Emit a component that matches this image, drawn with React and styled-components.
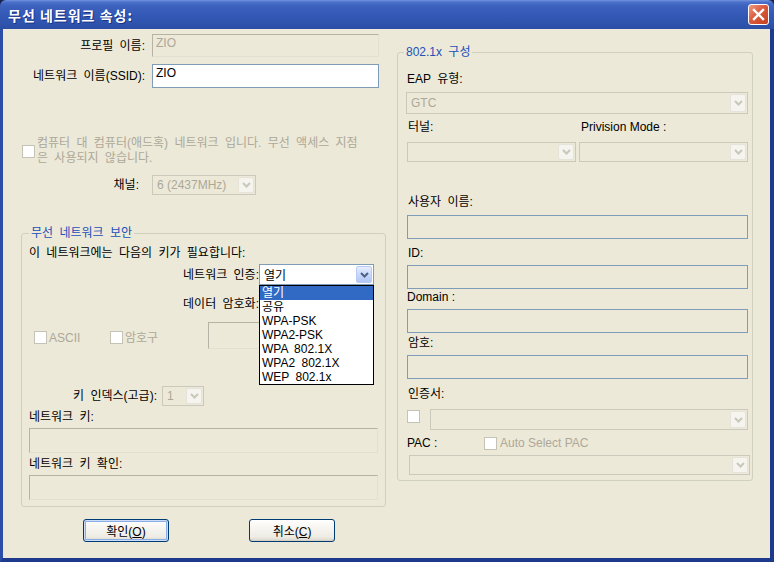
import React from 'react';
import styled, { createGlobalStyle } from 'styled-components';

// Windows XP (Luna) palette
const xp = {
  face: '#ece9d8',
  disabledText: '#aca899',
  groupBorder: '#d0d0bf',
  legend: '#2150b9',
  editBorder: '#7f9db9',
  comboDisabledBorder: '#cbc9bc',
  sunken: '#b5b3a6 #e2dfd3 #e2dfd3 #b5b3a6',
  selection: '#316ac5',
};

const GlobalStyle = createGlobalStyle`
  * { box-sizing: border-box; }
  html, body { margin: 0; padding: 0; background: #16244f; }
  body {
    font-family: "Liberation Sans", "Noto Sans CJK KR", sans-serif;
    font-size: 12px;
    word-spacing: 3px;
    color: #000;
  }
`;

const Window = styled.div`
  width: 774px;
  height: 562px;
  display: flex;
  flex-direction: column;
`;

const TitleBar = styled.div`
  height: 29px;
  flex: none;
  display: flex;
  align-items: center;
  justify-content: space-between;
  padding: 0 5px 0 8px;
  border-radius: 6px 6px 0 0;
  background: linear-gradient(
    to bottom,
    #7394de 0px,
    #4c71cb 2px,
    #3c62be 6px,
    #3459b6 14px,
    #3055af 22px,
    #2b4ea5 29px
  );
`;

const Title = styled.span`
  color: #fff;
  font-family: "Noto Sans CJK KR", sans-serif;
  font-weight: 700;
  font-size: 14px;
  line-height: 16px;
  letter-spacing: 1px;
  word-spacing: 0;
  text-shadow: 1px 1px 0 #1b3182;
`;

const CloseButton = styled.button`
  width: 21px;
  height: 21px;
  padding: 0;
  display: flex;
  align-items: center;
  justify-content: center;
  border: 1px solid #fff;
  border-radius: 3px;
  background: linear-gradient(135deg, #ee9c82 0%, #dc5a3d 45%, #c3411f 100%);
`;

const Frame = styled.div`
  flex: 1;
  display: flex;
  align-items: flex-start;
  gap: 11px;
  padding: 5px 17px 0 18px;
  background: ${xp.face};
  border-left: 3px solid #2d4ea6;
  border-right: 4px solid #1d3a8c;
  border-bottom: 4px solid #1d3a8c;
`;

const Column = styled.div`
  width: ${(p) => p.$w}px;
  flex: none;
  display: flex;
  flex-direction: column;
`;

const FormRow = styled.div`
  display: grid;
  grid-template-columns: ${(p) => p.$cols};
  column-gap: ${(p) => p.$gap || 0}px;
  align-items: center;
  margin-top: ${(p) => p.$mt || 0}px;
  padding-left: ${(p) => p.$pl || 0}px;
`;

const Label = styled.span`
  display: block;
  flex: none;
  width: ${(p) => (p.$w ? `${p.$w}px` : 'auto')};
  line-height: 14px;
  white-space: nowrap;
  word-spacing: ${(p) => (p.$latin ? 'normal' : '3px')};
  text-align: ${(p) => (p.$right ? 'right' : 'left')};
  padding-right: ${(p) => p.$pr || 0}px;
  padding-left: ${(p) => p.$pl || 0}px;
  margin-top: ${(p) => p.$mt || 0}px;
  color: ${(p) => (p.$disabled ? xp.disabledText : '#000')};
`;

const Edit = styled.div`
  height: ${(p) => p.$h}px;
  width: ${(p) => (p.$w ? `${p.$w}px` : 'auto')};
  margin-top: ${(p) => p.$mt || 0}px;
  padding: 1px 3px;
  line-height: 14px;
  white-space: nowrap;
  border: 1px solid;
  border-color: ${(p) => (p.$tone === 'disabled' ? xp.sunken : xp.editBorder)};
  background: ${(p) => (p.$tone === 'white' ? '#fff' : xp.face)};
  color: ${(p) => (p.$tone === 'disabled' ? xp.disabledText : '#000')};
`;

const ComboBox = styled.div`
  position: relative;
  display: flex;
  height: ${(p) => p.$h}px;
  width: ${(p) => (p.$w ? `${p.$w}px` : 'auto')};
  margin: ${(p) => p.$margin || '0'};
  border: 1px solid ${(p) => (p.$disabled ? xp.comboDisabledBorder : xp.editBorder)};
  background: ${(p) => (p.$disabled ? xp.face : '#fff')};
  flex: ${(p) => (p.$grow ? 1 : 'none')};
`;

const ComboText = styled.span`
  flex: 1;
  min-width: 0;
  display: flex;
  align-items: center;
  padding: 0 3px 0 4px;
  white-space: nowrap;
  overflow: hidden;
  word-spacing: normal;
  color: ${(p) => (p.$disabled ? xp.disabledText : '#000')};
`;

const ComboArrow = styled.span`
  flex: none;
  width: 16px;
  margin: 1px;
  display: flex;
  align-items: center;
  justify-content: center;
  border-radius: 2px;
  border: 1px solid ${(p) => (p.$disabled ? '#e6e4da' : '#b9cbf3')};
  background: ${(p) =>
    p.$disabled ? '#f5f4ef' : 'linear-gradient(#e6edfd, #c6d6fb 55%, #b1c6f6)'};
`;

const DropList = styled.ul`
  position: absolute;
  top: calc(100% + 1px);
  left: -1px;
  width: calc(100% + 2px);
  margin: 0;
  padding: 0;
  list-style: none;
  background: #fff;
  border: 1px solid #000;
  z-index: 2;
`;

const DropItem = styled.li`
  height: 14px;
  line-height: 14px;
  padding-left: 2px;
  white-space: nowrap;
  background: ${(p) => (p.$selected ? xp.selection : 'transparent')};
  color: ${(p) => (p.$selected ? '#fff' : '#000')};
`;

const GroupBox = styled.fieldset`
  margin: ${(p) => p.$mt}px 0 0;
  padding: ${(p) => p.$pad};
  width: ${(p) => (p.$w ? `${p.$w}px` : 'auto')};
  min-width: 0;
  border: 1px solid ${xp.groupBorder};
  border-radius: 3px;
`;

const GroupTitle = styled.legend`
  padding: 0 2px;
  margin-left: ${(p) => p.$offset || 0}px;
  line-height: 14px;
  word-spacing: 3px;
  color: ${xp.legend};
`;

const CheckBox = styled.span`
  width: 13px;
  height: 13px;
  flex: none;
  margin-top: ${(p) => p.$mt || 0}px;
  border: 1px solid ${(p) => (p.$disabled ? '#c5c3b6' : '#1c5180')};
  background: #fff;
`;

const CheckOption = styled.div`
  display: flex;
  align-items: center;
  gap: ${(p) => (p.$gap === undefined ? 2 : p.$gap)}px;
  width: ${(p) => (p.$w ? `${p.$w}px` : 'auto')};
  flex: none;
  line-height: ${(p) => p.$lh || 14}px;
  margin-top: ${(p) => p.$mt || 0}px;
  padding-left: ${(p) => p.$pl || 0}px;
  white-space: nowrap;
  word-spacing: ${(p) => (p.$latin ? 'normal' : '3px')};
  color: ${(p) => (p.$disabled ? xp.disabledText : '#000')};
`;

const InlineRow = styled.div`
  display: flex;
  align-items: ${(p) => p.$align || 'center'};
  gap: ${(p) => p.$gap || 0}px;
  margin-top: ${(p) => p.$mt || 0}px;
  padding-left: ${(p) => p.$pl || 0}px;
`;

const ButtonRow = styled.div`
  display: flex;
  gap: 80px;
  margin-top: 12px;
  padding-left: 62px;
`;

const PushButton = styled.button`
  width: 86px;
  height: 23px;
  padding: 0;
  font-family: inherit;
  font-size: 12px;
  color: #000;
  border: 1px solid #003c74;
  border-radius: 3px;
  background: linear-gradient(#ffffff 0%, #f8f7f3 30%, #eeece4 80%, #d9d5c9 100%);
  box-shadow: ${(p) =>
    p.$default
      ? 'inset 0 0 0 1px #cddcf7, inset 0 0 0 2px #8aaee5'
      : 'inset 0 -1px 0 #d6d0c5'};
`;

function Chevron({ disabled }) {
  return (
    <svg width="9" height="6" viewBox="0 0 9 6">
      <polyline
        points="1,1 4.5,4.5 8,1"
        fill="none"
        stroke={disabled ? '#c9c7ba' : '#4d6185'}
        strokeWidth="2"
      />
    </svg>
  );
}

function Combo({ value, disabled, w, h = 21, margin, grow, children }) {
  return (
    <ComboBox $w={w} $h={h} $disabled={disabled} $margin={margin} $grow={grow}>
      <ComboText $disabled={disabled}>{value}</ComboText>
      <ComboArrow $disabled={disabled}>
        <Chevron disabled={disabled} />
      </ComboArrow>
      {children}
    </ComboBox>
  );
}

const authOptions = ['열기', '공유', 'WPA-PSK', 'WPA2-PSK', 'WPA 802.1X', 'WPA2 802.1X', 'WEP 802.1x'];

export default function App() {
  return (
    <>
      <GlobalStyle />
      <Window>
        <TitleBar>
          <Title>무선 네트워크 속성:</Title>
          <CloseButton aria-label="닫기">
            <svg width="13" height="13" viewBox="0 0 13 13">
              <path d="M2 2 L11 11 M11 2 L2 11" stroke="#fff" strokeWidth="2.4" strokeLinecap="square" />
            </svg>
          </CloseButton>
        </TitleBar>

        <Frame>
          <Column $w={365}>
            <FormRow $cols="124px 227px" $gap={7}>
              <Label $right>프로필 이름:</Label>
              <Edit $h={23} $tone="disabled">ZIO</Edit>
            </FormRow>
            <FormRow $cols="124px 227px" $gap={7} $mt={7}>
              <Label $right>네트워크 이름(SSID):</Label>
              <Edit $h={24} $tone="white">ZIO</Edit>
            </FormRow>

            <CheckOption $disabled $mt={48} $pl={1} $lh={15}>
              <CheckBox $disabled />
              <span>
                컴퓨터 대 컴퓨터(애드혹) 네트워크 입니다. 무선 액세스 지점
                <br />은 사용되지 않습니다.
              </span>
            </CheckOption>

            <FormRow $cols="124px 104px" $gap={7} $mt={9}>
              <Label $right $pr={6}>채널:</Label>
              <Combo value="6 (2437MHz)" disabled h={20} />
            </FormRow>

            <GroupBox $mt={31} $pad="6px 8px 6px 7px">
              <GroupTitle>무선 네트워크 보안</GroupTitle>
              <Label>이 네트워크에는 다음의 키가 필요합니다:</Label>

              <FormRow $cols="230px 115px" $mt={4}>
                <Label $right>네트워크 인증:</Label>
                <Combo value="열기">
                  <DropList>
                    {authOptions.map((opt, i) => (
                      <DropItem key={opt} $selected={i === 0}>
                        {opt}
                      </DropItem>
                    ))}
                  </DropList>
                </Combo>
              </FormRow>

              <FormRow $cols="230px 115px" $mt={8}>
                <Label $right>데이터 암호화:</Label>
                <Combo disabled />
              </FormRow>

              <InlineRow $mt={8} $pl={5}>
                <CheckOption $w={76} $disabled $mt={4}>
                  <CheckBox $disabled />
                  <span>ASCII</span>
                </CheckOption>
                <CheckOption $w={98} $disabled $mt={4}>
                  <CheckBox $disabled />
                  <span>암호구</span>
                </CheckOption>
                <Edit $h={27} $w={166} $tone="disabled" />
              </InlineRow>

              <FormRow $cols="128px 42px" $gap={5} $mt={37}>
                <Label $right>키 인덱스(고급):</Label>
                <Combo value="1" disabled h={20} />
              </FormRow>

              <Label $mt={4}>네트워크 키:</Label>
              <Edit $h={25} $w={349} $mt={4} $tone="disabled" />
              <Label $mt={4}>네트워크 키 확인:</Label>
              <Edit $h={25} $w={349} $mt={4} $tone="disabled" />
            </GroupBox>

            <ButtonRow>
              <PushButton $default>
                확인(<u>O</u>)
              </PushButton>
              <PushButton>
                취소(<u>C</u>)
              </PushButton>
            </ButtonRow>
          </Column>

          <GroupBox $w={356} $mt={11} $pad="13px 4px 5px 9px">
            <GroupTitle $offset={-3}>802.1x 구성</GroupTitle>
            <Label>EAP 유형:</Label>
            <Combo value="GTC" disabled h={22} margin="6px 0 0 -1px" />

            <FormRow $cols="169px 169px" $gap={3} $mt={6}>
              <Label $pl={1}>터널:</Label>
              <Label $pl={2} $latin>Privision Mode :</Label>
            </FormRow>
            <FormRow $cols="169px 169px" $gap={3} $mt={8}>
              <Combo disabled h={20} />
              <Combo disabled h={20} />
            </FormRow>

            <Label $mt={33} $pl={1}>사용자 이름:</Label>
            <Edit $h={24} $mt={6} $tone="flat" />
            <Label $mt={7} $pl={1}>ID:</Label>
            <Edit $h={24} $mt={5} $tone="flat" />
            <Label $mt={1} $latin>Domain :</Label>
            <Edit $h={24} $mt={5} $tone="flat" />
            <Label $mt={3} $pl={1}>암호:</Label>
            <Edit $h={24} $mt={5} $tone="flat" />
            <Label $mt={8} $pl={1}>인증서:</Label>

            <InlineRow $mt={8} $gap={10} $align="flex-start">
              <CheckBox $disabled $mt={1} />
              <Combo disabled grow h={21} />
            </InlineRow>

            <InlineRow $mt={6}>
              <Label $w={77} $latin>PAC :</Label>
              <CheckOption $disabled $gap={3} $latin>
                <CheckBox $disabled />
                <span>Auto Select PAC</span>
              </CheckOption>
            </InlineRow>
            <Combo disabled h={20} margin="5px -2px 0 2px" />
          </GroupBox>
        </Frame>
      </Window>
    </>
  );
}
